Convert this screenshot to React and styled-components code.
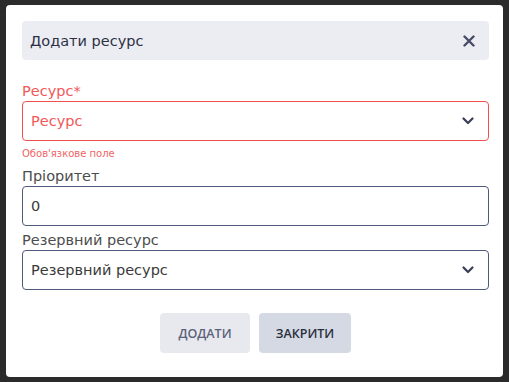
import React from 'react';
import styled, { createGlobalStyle } from 'styled-components';

const GlobalStyle = createGlobalStyle`
  html, body {
    margin: 0;
    padding: 0;
    background: #2b2b2b;
  }
  body {
    font-family: "DejaVu Sans", "Noto Sans", sans-serif;
  }
`;

const Overlay = styled.div`
  width: 509px;
  height: 382px;
  padding: 5px 6px;
  box-sizing: border-box;
  background: #2b2b2b;
`;

const Modal = styled.div`
  width: 497px;
  height: 372px;
  box-sizing: border-box;
  background: #fff;
  border-radius: 4px;
  padding: 16px 14px 0 16px;
  display: flex;
  flex-direction: column;
`;

const Header = styled.div`
  height: 39px;
  background: #ecedf3;
  border-radius: 4px;
  display: flex;
  align-items: center;
  justify-content: space-between;
  padding: 0 14px 0 8px;
  margin-bottom: 21px;
`;

const Title = styled.div`
  font-size: 14.5px;
  color: #2d3145;
`;

const CloseBtn = styled.button`
  border: none;
  background: none;
  padding: 0;
  display: flex;
  cursor: pointer;
`;

const Field = styled.div`
  display: flex;
  flex-direction: column;
  margin-top: ${({ gap }) => gap || 0}px;
`;

const Label = styled.label`
  font-size: 14.5px;
  line-height: 20px;
  color: ${({ error }) => (error ? '#f0585a' : '#4d4d4d')};
`;

const Box = styled.div`
  height: 40px;
  box-sizing: border-box;
  border: 1px solid ${({ error }) => (error ? '#f05050' : '#4f5a7d')};
  border-radius: 4px;
  display: flex;
  align-items: center;
  justify-content: space-between;
  padding: 0 13px 0 8px;
`;

const Value = styled.span`
  font-size: 14.5px;
  color: ${({ error }) => (error ? '#f0585a' : '#3a3a3a')};
`;

const ErrorText = styled.div`
  font-size: 10px;
  line-height: 14px;
  color: #f06565;
  margin: 6px 0 5px;
`;

const Actions = styled.div`
  display: flex;
  justify-content: center;
  gap: 9px;
  margin-top: 23px;
`;

const Button = styled.button`
  height: 40px;
  width: ${({ w }) => w}px;
  border: none;
  border-radius: 4px;
  font-family: "Open Sans", "DejaVu Sans", sans-serif;
  font-weight: 600;
  font-size: 12.5px;
  text-transform: uppercase;
  background: ${({ primary }) => (primary ? '#e8e9ef' : '#d5d9e3')};
  color: ${({ primary }) => (primary ? '#5c627a' : '#2a2e3d')};
  cursor: pointer;
`;

const Chevron = () => (
  <svg width="14" height="14" viewBox="0 0 14 14">
    <path d="M2.5 4.5 L7 9 L11.5 4.5" fill="none" stroke="#3a3d55" strokeWidth="2.2" strokeLinecap="round" strokeLinejoin="round" />
  </svg>
);

const Cross = () => (
  <svg width="12" height="12" viewBox="0 0 12 12">
    <path d="M1.5 1.5 L10.5 10.5 M10.5 1.5 L1.5 10.5" stroke="#484b65" strokeWidth="2.4" strokeLinecap="round" />
  </svg>
);

const App = () => (
  <>
    <GlobalStyle />
    <Overlay>
      <Modal>
        <Header>
          <Title>Додати ресурс</Title>
          <CloseBtn>
            <Cross />
          </CloseBtn>
        </Header>
        <Field>
          <Label error>Ресурс*</Label>
          <Box error>
            <Value error>Ресурс</Value>
            <Chevron />
          </Box>
          <ErrorText>Обов'язкове поле</ErrorText>
        </Field>
        <Field>
          <Label>Пріоритет</Label>
          <Box>
            <Value>0</Value>
          </Box>
        </Field>
        <Field gap={4}>
          <Label>Резервний ресурс</Label>
          <Box>
            <Value>Резервний ресурс</Value>
            <Chevron />
          </Box>
        </Field>
        <Actions>
          <Button primary w={90}>Додати</Button>
          <Button w={92}>Закрити</Button>
        </Actions>
      </Modal>
    </Overlay>
  </>
);

export default App;
